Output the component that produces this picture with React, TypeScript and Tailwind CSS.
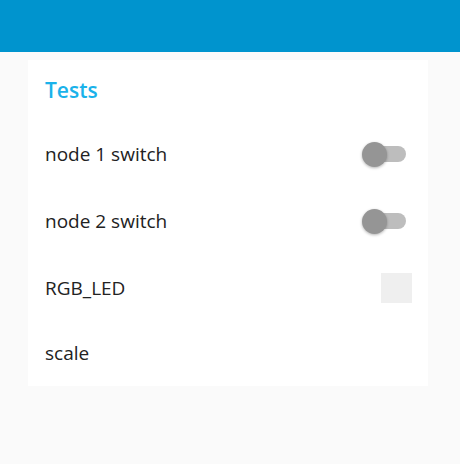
import React from 'react';

function Toggle() {
    return (
        <div className="relative w-[44px] h-[26px] flex items-center">
            <div className="absolute right-0 w-[31px] h-[16px] rounded-full bg-[#bdbdbd]" />
            <div className="absolute left-0 w-[25px] h-[25px] rounded-full bg-[#959595] shadow-[0_1px_3px_rgba(0,0,0,0.3)]" />
        </div>
    );
}

export default function App() {
    return (
        <div className="w-[460px] h-[464px] bg-[#fafafa] font-['Open_Sans',sans-serif]">
            <div className="h-[52px] bg-[#0094ce]" />
            <div className="pt-[8px] pl-[28px]">
                <div className="w-[400px] h-[326px] bg-white flex flex-col">
                    <div className="h-[61px] flex items-center pl-[17px]">
                        <h2 className="text-[21px] font-semibold text-[#1ab2ea]">Tests</h2>
                    </div>
                    <div className="h-[67px] flex items-center justify-between pl-[17px] pr-[22px]">
                        <span className="text-[19px] text-[#222]">node 1 switch</span>
                        <Toggle />
                    </div>
                    <div className="h-[67px] flex items-center justify-between pl-[17px] pr-[22px]">
                        <span className="text-[19px] text-[#222]">node 2 switch</span>
                        <Toggle />
                    </div>
                    <div className="h-[67px] flex items-center justify-between pl-[17px] pr-[16px]">
                        <span className="text-[19px] text-[#222]">RGB_LED</span>
                        <div className="w-[31px] h-[30px] bg-[#efefef]" />
                    </div>
                    <div className="h-[65px] flex items-center pl-[17px]">
                        <span className="text-[19px] text-[#222]">scale</span>
                    </div>
                </div>
            </div>
        </div>
    );
}
